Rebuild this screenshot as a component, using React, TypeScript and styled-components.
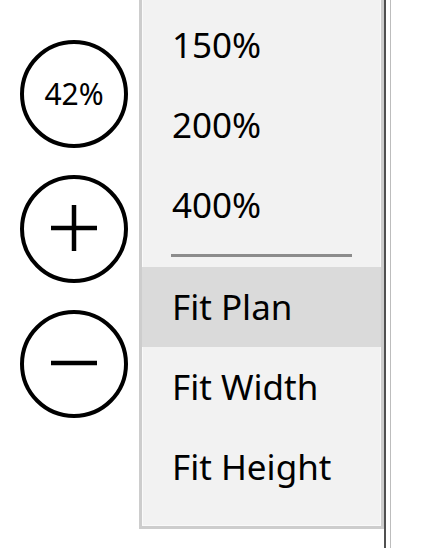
import React from 'react';
import styled, { createGlobalStyle } from 'styled-components';

const Global = createGlobalStyle`
  html, body {
    margin: 0;
    padding: 0;
    background: #fff;
  }
  body {
    font-family: "Noto Sans", "Open Sans", sans-serif;
    color: #000;
  }
`;

const Page = styled.div`
  display: flex;
  align-items: flex-start;
  height: 548px;
  overflow: hidden;
`;

const Controls = styled.div`
  width: 139px;
  flex-shrink: 0;
  display: flex;
  flex-direction: column;
  gap: 27px;
  padding: 40px 0 0 20px;
  box-sizing: border-box;
`;

const RoundButton = styled.button`
  width: 108px;
  height: 108px;
  box-sizing: border-box;
  border: 4px solid #000;
  border-radius: 50%;
  background: #fff;
  padding: 0 0 2px;
  display: flex;
  align-items: center;
  justify-content: center;
  font-family: "Noto Sans", "Open Sans", sans-serif;
  font-size: 30px;
  color: #000;
  cursor: pointer;
`;

const Menu = styled.div`
  width: 245px;
  flex-shrink: 0;
  box-sizing: border-box;
  background: #f2f2f2;
  border: 3px solid #cdcdcd;
  border-top: none;
  box-shadow: inset 1px -1px 0 #fafafa, inset -1px 0 0 #fafafa;
  padding: 5px 0 19px;
  display: flex;
  flex-direction: column;
`;

const Item = styled.div<{ $active?: boolean }>`
  height: 80px;
  line-height: 80px;
  padding-left: 30px;
  font-size: 35px;
  background: ${(p) => (p.$active ? '#dadada' : 'transparent')};
  white-space: nowrap;
`;

const Separator = styled.div`
  height: 3px;
  margin: 9px 29px 10px;
  background: #8c8c8c;
`;

const Edge = styled.div`
  align-self: stretch;
  width: 7px;
  flex-shrink: 0;
  box-sizing: border-box;
  border-left: 2px solid #505050;
  border-right: 1px solid #bdbdbd;
`;

const Icon = ({ minus }: { minus?: boolean }) => (
  <svg width="46" height="46" viewBox="0 0 46 46">
    <line x1="0" y1="23" x2="46" y2="23" stroke="#000" strokeWidth="4.5" />
    {!minus && <line x1="23" y1="0" x2="23" y2="46" stroke="#000" strokeWidth="4.5" />}
  </svg>
);

export default function App() {
  const items = ['150%', '200%', '400%'];
  const fits = ['Fit Plan', 'Fit Width', 'Fit Height'];
  return (
    <>
      <Global />
      <Page>
        <Controls>
          <RoundButton>42%</RoundButton>
          <RoundButton>
            <Icon />
          </RoundButton>
          <RoundButton>
            <Icon minus />
          </RoundButton>
        </Controls>
        <Menu>
          {items.map((t) => (
            <Item key={t}>{t}</Item>
          ))}
          <Separator />
          {fits.map((t, i) => (
            <Item key={t} $active={i === 0}>
              {t}
            </Item>
          ))}
        </Menu>
        <Edge />
      </Page>
    </>
  );
}
